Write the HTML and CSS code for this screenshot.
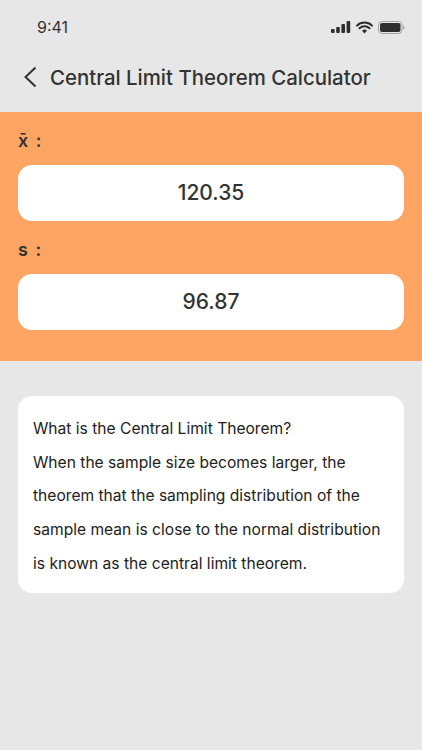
FILE: index.html
```html
<!DOCTYPE html>
<html lang="en">
<head>
  <meta charset="UTF-8">
  <meta name="viewport" content="width=device-width, initial-scale=1.0">
  <title>Central Limit Theorem Calculator</title>
  <link rel="stylesheet" href="styles.css">
</head>
<body>
  <div class="status-bar">
    <span class="time">9:41</span>
    <div class="status-icons">
      <svg width="20" height="12" viewBox="0 0 20 12">
        <rect x="0" y="8" width="3.600" height="4" rx="1" fill="#2e2e2e"/>
        <rect x="5.200" y="6" width="3.600" height="6" rx="1" fill="#2e2e2e"/>
        <rect x="10.400" y="3" width="3.600" height="9" rx="1" fill="#2e2e2e"/>
        <rect x="15.600" y="0" width="3.600" height="12" rx="1" fill="#2e2e2e"/>
      </svg>
      <svg width="17" height="13" viewBox="0 0 17 13">
        <path d="M1 4.600a10.800 10.800 0 0 1 15 0M3.500 7.300a7.200 7.200 0 0 1 10 0" fill="none" stroke="#2e2e2e" stroke-width="2" stroke-linecap="round"/>
        <path d="M6 9.800a3.600 3.600 0 0 1 5 0L8.500 12.600z" fill="#2e2e2e"/>
      </svg>
      <svg width="27" height="13" viewBox="0 0 27 13">
        <rect x="0.500" y="0.500" width="23.500" height="12" rx="3.500" fill="none" stroke="#a3a3a3"/>
        <rect x="2" y="2" width="20.500" height="9" rx="2" fill="#2e2e2e"/>
        <path d="M25.200 4.500c1 .3 1.500 1 1.500 2s-.5 1.700-1.500 2z" fill="#a3a3a3"/>
      </svg>
    </div>
  </div>

  <div class="nav-bar">
    <svg class="back-icon" width="14" height="22" viewBox="0 0 14 22">
      <path d="M12.500 1.500 2.500 11l10 9.500" fill="none" stroke="#333" stroke-width="2"/>
    </svg>
    <h1>Central Limit Theorem Calculator</h1>
  </div>

  <div class="results">
    <div class="result-label">x̄ :</div>
    <div class="result-value">120.35</div>
    <div class="result-label label-s">s :</div>
    <div class="result-value">96.87</div>
  </div>

  <div class="info-card">
    <p>What is the Central Limit Theorem?</p>
    <p>When the sample size becomes larger, the</p>
    <p>theorem that the sampling distribution of the</p>
    <p>sample mean is close to the normal distribution</p>
    <p>is known as the central limit theorem.</p>
  </div>
</body>
</html>
```

FILE: styles.css
```css
body {
  margin: 0;
  height: 750px;
  overflow: hidden;
  background: #e7e7e7;
  color: #333;
  font-family: Inter, "Liberation Sans", sans-serif;
}
.status-bar {
  display: flex;
  justify-content: space-between;
  align-items: center;
  height: 54px;
  padding: 0 17px 0 37px;
}
.time {
  font-size: 16px;
}
.status-icons {
  display: flex;
  align-items: center;
  gap: 5px;
}
.nav-bar {
  display: flex;
  align-items: center;
  height: 46px;
  padding: 0 0 12px 23px;
  gap: 13px;
}
.nav-bar h1 {
  margin: 0;
  font-size: 20.400px;
  font-weight: 500;
  white-space: nowrap;
}
.results {
  height: 249px;
  box-sizing: border-box;
  padding: 18px 18px 0;
  background: #ffa564;
}
.result-label {
  height: 35px;
  font-size: 18px;
  line-height: 22px;
  font-weight: 600;
  word-spacing: 3px;
}
.label-s {
  margin-top: 18px;
}
.result-value {
  height: 56px;
  background: #fff;
  border-radius: 14px;
  font-size: 21px;
  font-weight: 500;
  line-height: 56px;
  text-align: center;
}
.info-card {
  margin: 35px 18px 0;
  padding: 16px 15px 12px;
  height: 197px;
  box-sizing: border-box;
  background: #fff;
  border-radius: 14px;
  color: #222;
}
.info-card p {
  margin: 0;
  font-size: 15.600px;
  line-height: 33.700px;
  white-space: nowrap;
}
```
